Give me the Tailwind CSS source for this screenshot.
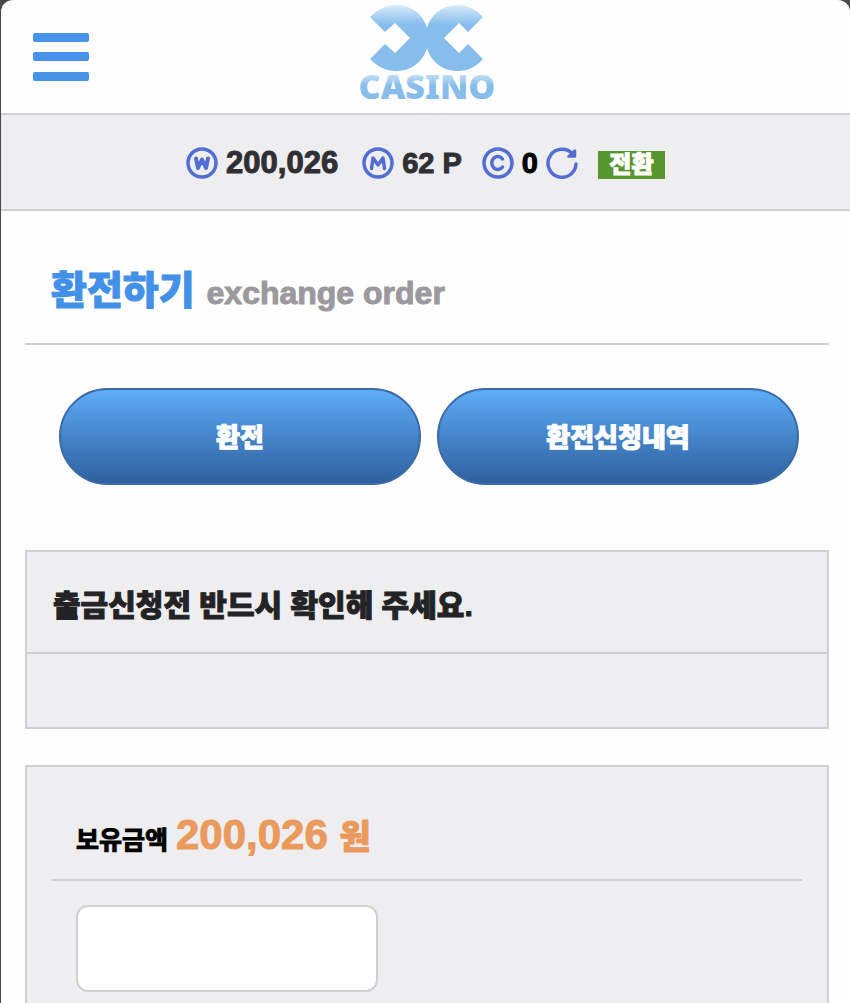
<!DOCTYPE html>
<html lang="ko">
<head>
  <meta charset="UTF-8">
  <meta name="viewport" content="width=device-width, initial-scale=1.0">
  <title>환전하기</title>
  <script src="https://cdn.jsdelivr.net/npm/@tailwindcss/browser@4"></script>
</head>
<body class="bg-[#48484a] font-['Liberation_Sans','Noto_Sans_CJK_KR',sans-serif] font-bold [-webkit-text-stroke:1px]">
  <div class="ml-px min-h-screen rounded-t-xl bg-[#fefefe] overflow-hidden">

    <!-- Header -->
    <header class="grid grid-cols-[1fr_auto_1fr] items-center h-[115px] border-b-2 border-[#d0d0d2] px-8">
      <button type="button" aria-label="메뉴" class="w-14 h-12 flex flex-col justify-between">
        <span class="w-full h-[9px] rounded-xs bg-[#4793ea]"></span>
        <span class="w-full h-[9px] rounded-xs bg-[#4793ea]"></span>
        <span class="w-full h-[9px] rounded-xs bg-[#4793ea]"></span>
      </button>
      <a href="#" aria-label="Casino" class="[-webkit-text-stroke:0]">
        <svg width="140" height="113" viewBox="-2 0 140 113">
          <defs>
            <linearGradient id="mark" x1="0" y1="0" x2="0" y2="1">
              <stop offset="0" stop-color="#d9ebfa"/>
              <stop offset="0.3" stop-color="#86bdeb"/>
              <stop offset="1" stop-color="#86bdeb"/>
            </linearGradient>
            <linearGradient id="word" x1="0" y1="0" x2="0" y2="1">
              <stop offset="0.25" stop-color="#c3dff6"/>
              <stop offset="0.5" stop-color="#86bdeb"/>
            </linearGradient>
          </defs>
          <path fill="url(#mark)" d="M12 17C20 9 28 5 38 5C53 5 65 14 69 28C73 14 85 5 100 5C110 5 119 10 125 17L110 32L101 23L86 38L101 53L110 44L125 59C118 67 110 71 100 71C85 71 73 62 69 48C65 62 53 71 38 71C28 71 20 67 12 59L27 44L37 53L52 38L37 23L27 32Z"/>
          <text x="69" y="99" text-anchor="middle" font-family="Noto Sans" font-weight="900" font-size="34" fill="url(#word)">CASINO</text>
        </svg>
      </a>
    </header>

    <!-- Balance -->
    <section class="flex items-center justify-center h-24 pt-0.5 border-b-2 border-[#d0d0d2] bg-[#eeeef0] text-[31px] leading-8 text-[#303034]">
      <div class="flex items-center gap-2">
        <svg width="32" height="32" viewBox="0 0 32 32" fill="none" stroke="#526ed3" stroke-linecap="round" stroke-linejoin="round">
          <circle cx="16" cy="16" r="14" stroke-width="3.5"/>
          <path stroke-width="4" d="M10 11.500L12 21L16 12.500L20 21L22 11.500"/>
        </svg>
        <span>200,026</span>
      </div>
      <div class="flex items-center gap-2 ml-6">
        <svg width="32" height="32" viewBox="0 0 32 32" fill="none" stroke="#526ed3" stroke-linecap="round" stroke-linejoin="round">
          <circle cx="16" cy="16" r="14" stroke-width="3.5"/>
          <path stroke-width="3.5" d="M9.500 21.500L11 11L16 18L21 11L22.500 21.500"/>
        </svg>
        <span class="text-[29px]">62 P</span>
      </div>
      <div class="flex items-center gap-2 ml-5">
        <svg width="32" height="32" viewBox="0 0 32 32" fill="none" stroke="#526ed3" stroke-linecap="round" stroke-linejoin="round">
          <circle cx="16" cy="16" r="14" stroke-width="3.5"/>
          <path stroke-width="3.5" d="M20.5 12A6 6.5 0 1 0 20.5 20"/>
        </svg>
        <span class="text-[29px] text-black">0</span>
        <button type="button" aria-label="새로고침">
          <svg width="32" height="32" viewBox="0 0 32 32" fill="none" stroke="#526ed3" stroke-width="3.5" stroke-linecap="round" stroke-linejoin="round">
            <path d="M30 17A14 14 0 1 1 26.500 7"/>
            <path stroke-width="2.5" fill="#526ed3" d="M29 3.500V9.500H22.500Z"/>
          </svg>
        </button>
      </div>
      <button type="button" class="ml-5 mt-1 h-7 w-[67px] bg-[#58942f] text-white text-2xl leading-7 font-black flex items-center justify-center">전환</button>
    </section>

    <main class="pl-6 pr-[21px]">
      <h1 class="flex items-baseline gap-3 h-[134px] pt-[54px] pl-[26px] border-b-2 border-[#d0d0d2] text-[39px] leading-[52px] font-black text-[#4290e8]">
        환전하기
        <small class="text-[32px] font-bold text-[#9b999d]">exchange order</small>
      </h1>

      <nav class="grid grid-cols-2 gap-4 pt-[43px] pl-[34px] pr-[30px]">
        <button type="button" class="h-[97px] pt-1 rounded-full border-2 border-[#3a6ba5] bg-linear-to-b from-[#5eacf8] to-[#2f609f] text-white text-[26px] font-black">환전</button>
        <button type="button" class="h-[97px] pt-1 rounded-full border-2 border-[#3a6ba5] bg-linear-to-b from-[#5eacf8] to-[#2f609f] text-white text-[26px] font-black">환전신청내역</button>
      </nav>

      <!-- Notice -->
      <section class="mt-[65px] border-2 border-[#d0d0d2] bg-[#eeeef0]">
        <h2 class="px-[26px] pt-7 pb-5 border-b-2 border-[#d0d0d2] text-[30px] leading-[52px] font-black text-[#232325]">출금신청전 반드시 확인해 주세요.</h2>
        <div class="h-[73px]"></div>
      </section>

      <!-- Order form -->
      <form class="mt-9 border-2 border-b-0 border-[#d0d0d2] bg-[#eeeef0] px-[25px] pt-10 pb-3">
        <label for="amount" class="flex items-baseline gap-2 h-[74px] pl-6 pt-0.5 border-b-2 border-[#d0d0d2] text-[25px] leading-[52px] text-black">
          보유금액
          <span class="text-[42px] text-[#ea9a5c]">200,026 <span class="text-[34px] font-black">원</span></span>
        </label>
        <input id="amount" type="text" class="block mt-6 ml-6 w-[302px] h-[87px] px-4 rounded-xl border-2 border-[#d0d0d2] bg-white text-[25px]">
      </form>
    </main>
  </div>
</body>
</html>
